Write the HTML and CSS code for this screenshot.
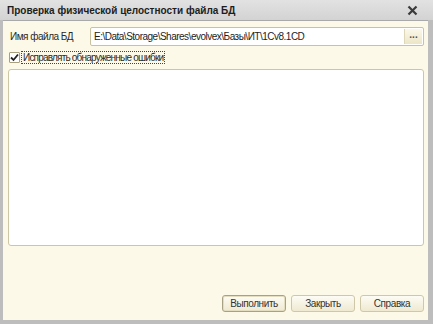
FILE: index.html
```html
<!DOCTYPE html>
<html>
<head>
	<meta charset="utf-8">
	<title>Проверка физической целостности файла БД</title>
	<link rel="stylesheet" href="styles.css">
</head>
<body>
	<div class="window">
		<div class="titlebar">
			<span class="title">Проверка физической целостности файла БД</span>
			<svg class="close" width="11" height="11" viewBox="0 0 11 11">
				<path d="M1.5 1.5 L9.5 9.5 M9.5 1.5 L1.5 9.5" stroke="#3a3a3a" stroke-width="2.2" fill="none"/>
			</svg>
		</div>
		<div class="frame">
			<div class="file-row">
				<span class="label">Имя файла БД</span>
				<div class="field">
					<span class="path">E:\Data\Storage\Shares\evolvex\Базы\ИТ\1Cv8.1CD</span>
					<span class="pick">...</span>
				</div>
			</div>
			<div class="check-row">
				<span class="checkbox">
					<svg width="9" height="9" viewBox="0 0 9 9">
						<path d="M1 4.5 L3.5 7 L8 1.5" stroke="#222" stroke-width="1.8" fill="none"/>
					</svg>
				</span>
				<span class="check-label">Исправлять обнаруженные ошибки</span>
			</div>
			<div class="log"></div>
			<div class="buttons">
				<button class="btn default">Выполнить</button>
				<button class="btn">Закрыть</button>
				<button class="btn">Справка</button>
			</div>
		</div>
	</div>
</body>
</html>
```

FILE: styles.css
```css
html { font-family: "Liberation Sans", Arial, sans-serif; }
body {
	margin: 0;
	padding: 0;
	background: #b5b5b5;
}

.window {
	width: 433px;
	height: 324px;
	display: flex;
	flex-direction: column;
	background: #bdbdbd;
}

.titlebar {
	height: 20px;
	display: flex;
	align-items: center;
	justify-content: space-between;
	padding: 0 15px 0 7px;
	background: linear-gradient(#e2e2e2, #d3d3d3);
}

.title {
	font-size: 10px;
	font-weight: bold;
	color: #1d1d1d;
}

.close { display: block; }

.frame {
	flex: 1;
	margin: 0 5px 4px 3px;
	background: #fcf9e9;
	border-top: 1px solid #a9a9a9;
	display: flex;
	flex-direction: column;
	padding: 6px 4px 0 5px;
	font-size: 10px;
	letter-spacing: -0.5px;
	color: #2a2a2a;
}

.file-row {
	display: flex;
	align-items: center;
	height: 19px;
}

.label {
	width: 80px;
	padding-left: 2px;
}

.field {
	flex: 1;
	height: 17px;
	background: #fff;
	border: 1px solid #c9c2a0;
	border-radius: 2px;
	display: flex;
	align-items: center;
	justify-content: space-between;
	color: #1d1d1d;
}

.path { padding-left: 3px; }

.pick {
	width: 17px;
	height: 15px;
	margin-right: 1px;
	background: linear-gradient(#fbf8ea, #ece5c6);
	border-left: 1px solid #ddd6b8;
	text-align: center;
	line-height: 12px;
	font-weight: bold;
	letter-spacing: 0;
	color: #555;
}

.check-row {
	display: flex;
	align-items: center;
	margin-top: 5px;
	height: 13px;
}

.checkbox {
	width: 9px;
	height: 9px;
	border: 1px solid #a79f7e;
	background: #fff;
	border-radius: 1px;
	display: flex;
	margin-left: 1px;
}

.check-label {
	border: 1px dotted #444;
	padding: 0 1px;
	line-height: 11px;
	margin-left: 1px;
	letter-spacing: -0.8px;
}

.log {
	margin-top: 5px;
	height: 175px;
	background: #fff;
	border: 1px solid #cdc6a6;
	border-radius: 3px;
}

.buttons {
	display: flex;
	justify-content: flex-end;
	gap: 5px;
	margin-top: 49px;
}

.btn {
	width: 64px;
	height: 17px;
	padding: 0;
	font-family: "Liberation Sans", Arial, sans-serif;
	font-size: 10px;
	letter-spacing: -0.4px;
	color: #333;
	background: linear-gradient(#fdfcf5, #efe9d0);
	border: 1px solid #cfc8a8;
	border-radius: 3px;
}

.btn.default {
	border-color: #a9a184;
	box-shadow: inset 0 0 0 1px #e4ddbf;
}
```
